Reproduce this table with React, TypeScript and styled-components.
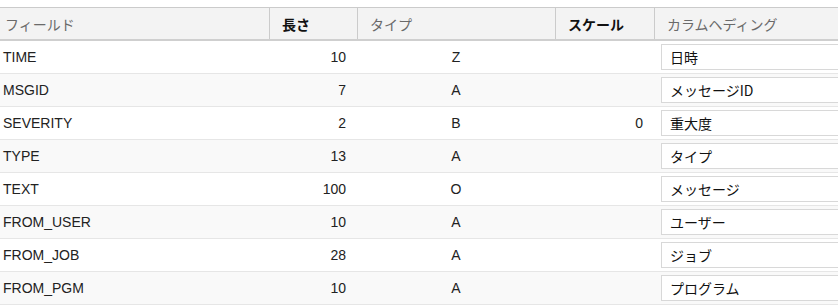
import * as React from "react";
import styled, { createGlobalStyle } from "styled-components";

const GlobalStyle = createGlobalStyle`
  html, body {
    margin: 0;
    padding: 0;
    background: #ffffff;
    overflow: hidden;
  }
  body {
    font-family: "Liberation Sans", Arial, "Noto Sans CJK JP", sans-serif;
    color: #222222;
  }
`;

const COLUMNS = "269px 88px 198px 99px minmax(0, 1fr)";

const Page = styled.div`
  padding-top: 7px;
  width: 100%;
  overflow: hidden;
`;

const HeaderRow = styled.div`
  display: grid;
  grid-template-columns: ${COLUMNS};
  height: 31px;
  background: #f3f3f3;
  border-top: 1px solid #cbcbcb;
  border-bottom: 2px solid #cfcfcf;
`;

const HeaderCell = styled.div<{ $strong?: boolean; $first?: boolean }>`
  display: flex;
  align-items: center;
  padding-left: ${({ $first }) => ($first ? "5px" : "12px")};
  border-left: ${({ $first }) => ($first ? "none" : "1px solid #cbcbcb")};
  font-family: "Noto Sans CJK JP", "Liberation Sans", sans-serif;
  font-size: 14px;
  font-weight: ${({ $strong }) => ($strong ? 700 : 400)};
  color: ${({ $strong }) => ($strong ? "#111111" : "#6a6a6a")};
  white-space: nowrap;
  overflow: hidden;
`;

const Row = styled.div<{ $odd: boolean }>`
  display: grid;
  grid-template-columns: ${COLUMNS};
  height: 32px;
  background: ${({ $odd }) => ($odd ? "#f9f9f9" : "#ffffff")};
  border-bottom: 1px solid #e6e6e6;
  font-size: 14px;
`;

const Cell = styled.div<{ $align?: "left" | "right" | "center" }>`
  display: flex;
  align-items: center;
  justify-content: ${({ $align }) =>
    $align === "right" ? "flex-end" : $align === "center" ? "center" : "flex-start"};
  padding: ${({ $align }) =>
    $align === "right" ? "0 11px 0 0" : $align === "center" ? "0" : "0 0 0 3px"};
  color: #222222;
  white-space: nowrap;
`;

const InputCell = styled.div`
  display: flex;
  align-items: center;
  padding-left: 7px;
  overflow: hidden;
`;

const HeadingInput = styled.input`
  box-sizing: border-box;
  flex: 0 0 220px;
  width: 220px;
  height: 26px;
  border: 1px solid #d8d8d8;
  padding: 0 8px;
  font-family: "Noto Sans CJK JP", "Liberation Sans", sans-serif;
  font-size: 14px;
  color: #111111;
  background: #ffffff;
  outline: none;
`;

type Field = {
  name: string;
  length: number;
  type: string;
  scale?: number;
  heading: string;
};

const fields: Field[] = [
  { name: "TIME", length: 10, type: "Z", heading: "日時" },
  { name: "MSGID", length: 7, type: "A", heading: "メッセージID" },
  { name: "SEVERITY", length: 2, type: "B", scale: 0, heading: "重大度" },
  { name: "TYPE", length: 13, type: "A", heading: "タイプ" },
  { name: "TEXT", length: 100, type: "O", heading: "メッセージ" },
  { name: "FROM_USER", length: 10, type: "A", heading: "ユーザー" },
  { name: "FROM_JOB", length: 28, type: "A", heading: "ジョブ" },
  { name: "FROM_PGM", length: 10, type: "A", heading: "プログラム" },
];

export default function App() {
  return (
    <>
      <GlobalStyle />
      <Page>
        <HeaderRow>
          <HeaderCell $first>フィールド</HeaderCell>
          <HeaderCell $strong>長さ</HeaderCell>
          <HeaderCell>タイプ</HeaderCell>
          <HeaderCell $strong>スケール</HeaderCell>
          <HeaderCell>カラムヘディング</HeaderCell>
        </HeaderRow>
        {fields.map((f, i) => (
          <Row key={f.name} $odd={i % 2 === 1}>
            <Cell>{f.name}</Cell>
            <Cell $align="right">{f.length}</Cell>
            <Cell $align="center">{f.type}</Cell>
            <Cell $align="right">{f.scale !== undefined ? f.scale : ""}</Cell>
            <InputCell>
              <HeadingInput defaultValue={f.heading} />
            </InputCell>
          </Row>
        ))}
      </Page>
    </>
  );
}
